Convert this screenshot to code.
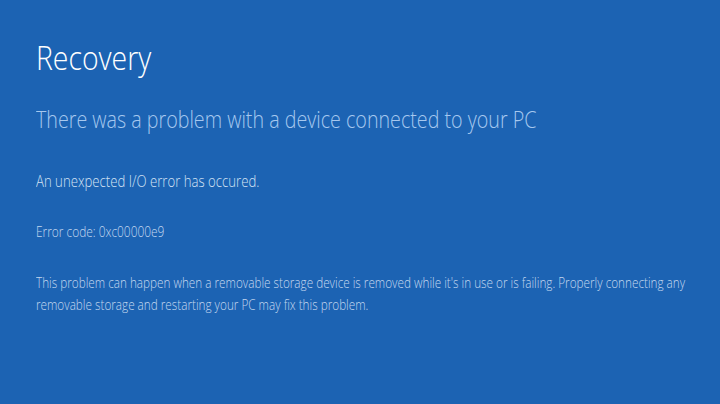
export default function App() {
  return (
    <div className="w-[720px] h-[404px] bg-[#1c63b3] overflow-hidden pl-[36px] pt-[38px]" style={{ fontFamily: '"Open Sans", "Noto Sans", sans-serif' }}>
      <h1 className="origin-left scale-x-[0.86] text-[33px] leading-[40px] font-light text-white whitespace-nowrap">Recovery</h1>
      <h2 className="mt-[26px] origin-left scale-x-[0.82] text-[24px] leading-[30px] font-light text-[#a6c8ef] whitespace-nowrap">There was a problem with a device connected to your PC</h2>
      <p className="mt-[37px] origin-left scale-x-[0.85] text-[15.5px] leading-[20px] font-light text-[#d3e2f4] whitespace-nowrap">An unexpected I/O error has occured.</p>
      <p className="mt-[31px] origin-left scale-x-[0.85] text-[14px] leading-[20px] font-light text-[#c3d7ef] whitespace-nowrap">Error code: 0xc00000e9</p>
      <p className="mt-[30px] w-[790px] origin-left scale-x-[0.838] text-[14px] leading-[22px] font-light text-[#c3d7ef]">This problem can happen when a removable storage device is removed while it's in use or is failing. Properly connecting any removable storage and restarting your PC may fix this problem.</p>
    </div>
  );
}
